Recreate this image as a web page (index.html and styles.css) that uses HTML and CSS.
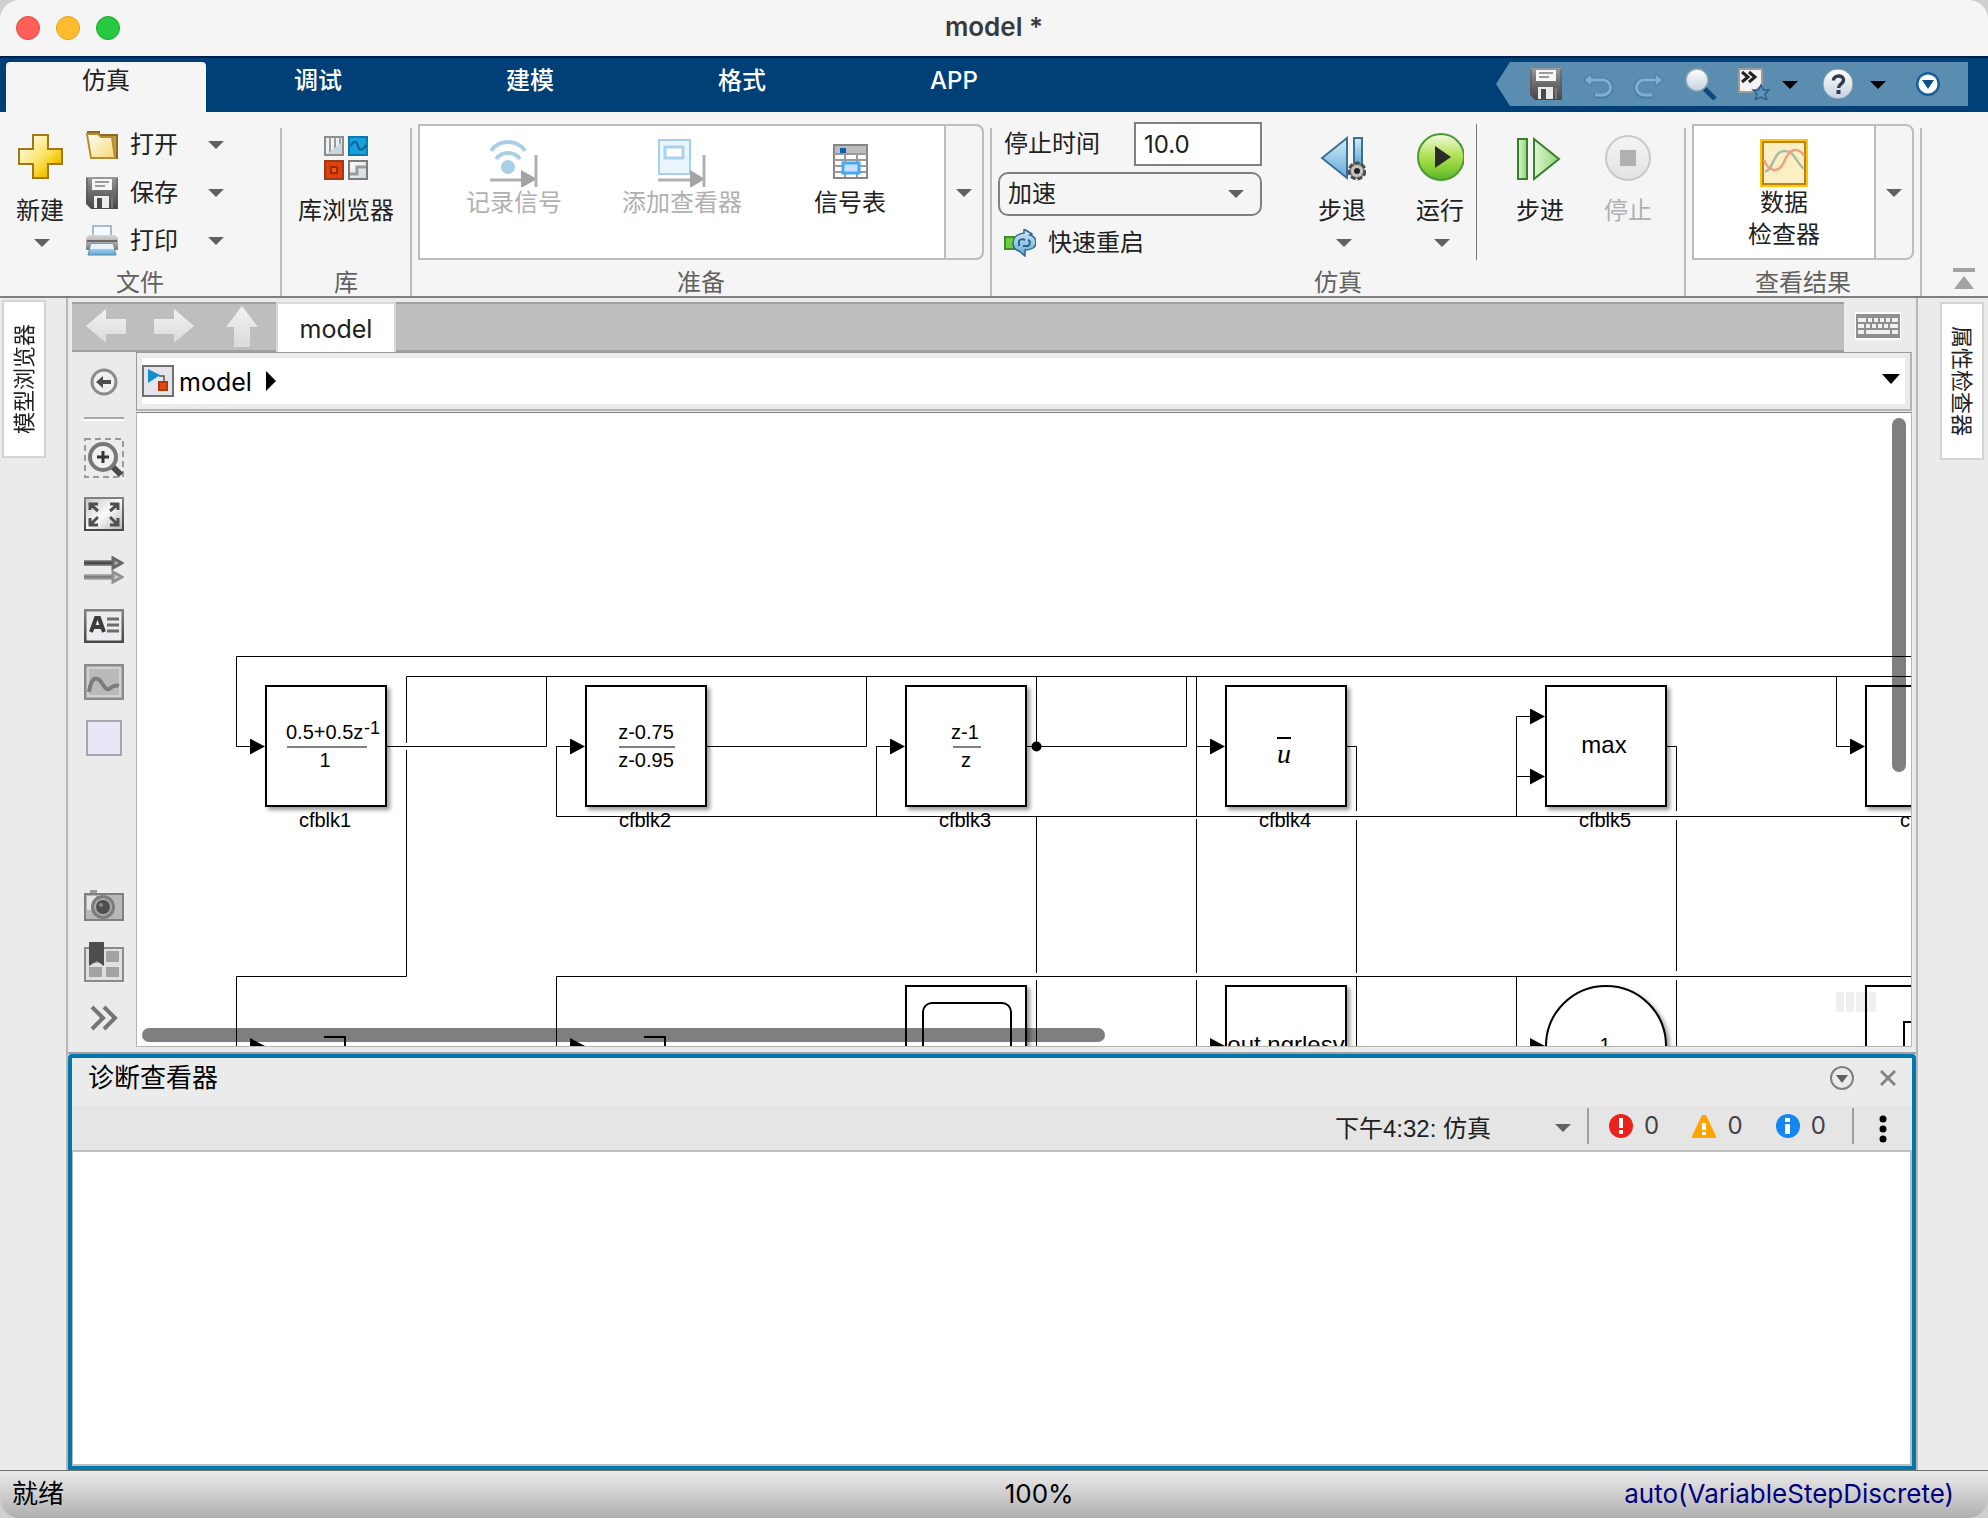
FILE: index.html
```html
<!DOCTYPE html>
<html lang="zh-CN">
<head>
<meta charset="utf-8">
<title>model *</title>
<link rel="stylesheet" href="styles.css">
</head>
<body>
<svg class="defs" aria-hidden="true">
  <defs>
    <linearGradient id="gold" x1="0" y1="0" x2="1" y2="1"><stop offset="0.1" stop-color="#fffdf0"/><stop offset="0.55" stop-color="#fbe05a"/><stop offset="0.75" stop-color="#f5c400"/><stop offset="1" stop-color="#e0a800"/></linearGradient>
    <linearGradient id="folder" x1="0" y1="0" x2="1" y2="1"><stop offset="0" stop-color="#fffef6"/><stop offset="1" stop-color="#f6d978"/></linearGradient>
    <linearGradient id="steel" x1="0" y1="0" x2="0" y2="1"><stop offset="0" stop-color="#9a9a9a"/><stop offset="0.5" stop-color="#6a6a6a"/><stop offset="1" stop-color="#484848"/></linearGradient>
    <linearGradient id="silver" x1="0" y1="0" x2="0" y2="1"><stop offset="0" stop-color="#d8d8d8"/><stop offset="1" stop-color="#7c7c7c"/></linearGradient>
    <linearGradient id="paper" x1="0" y1="0" x2="1" y2="1"><stop offset="0" stop-color="#ffffff"/><stop offset="1" stop-color="#ccd6e0"/></linearGradient>
    <linearGradient id="panel" x1="0" y1="0" x2="1" y2="1"><stop offset="0" stop-color="#c4c4c4"/><stop offset="0.5" stop-color="#fafafa"/><stop offset="1" stop-color="#b4b4b4"/></linearGradient>
    <linearGradient id="edge" x1="0" y1="0" x2="0" y2="1"><stop offset="0" stop-color="#808080"/><stop offset="1" stop-color="#484848"/></linearGradient>
    <linearGradient id="sky" x1="0" y1="0" x2="0" y2="1"><stop offset="0" stop-color="#d3ecfa"/><stop offset="1" stop-color="#5fa9d6"/></linearGradient>
    <linearGradient id="green" x1="0" y1="0" x2="0" y2="1"><stop offset="0" stop-color="#f4fbe6"/><stop offset="0.45" stop-color="#b4e25a"/><stop offset="0.7" stop-color="#8ed23a"/><stop offset="1" stop-color="#57b42c"/></linearGradient>
    <linearGradient id="leaf" x1="0" y1="0" x2="1" y2="0"><stop offset="0" stop-color="#dcf5cf"/><stop offset="1" stop-color="#8fd676"/></linearGradient>
    <linearGradient id="arrowFill" x1="0" y1="0" x2="0" y2="1"><stop offset="0" stop-color="#f2f2f2"/><stop offset="1" stop-color="#dadada"/></linearGradient>
    <linearGradient id="ball" x1="0" y1="0" x2="0" y2="1"><stop offset="0" stop-color="#ffffff"/><stop offset="1" stop-color="#c3d2df"/></linearGradient>
    <linearGradient id="stopFill" x1="0" y1="0" x2="0" y2="1"><stop offset="0" stop-color="#f4f4f4"/><stop offset="1" stop-color="#e2e2e2"/></linearGradient>
    <symbol id="caret" viewBox="0 0 16 8"><path d="M0 0h16L8 8z" fill="currentColor"/></symbol>
    <symbol id="disk" viewBox="0 0 32 32">
      <path d="M0 0h32v32H5l-5-5z" fill="url(#steel)"/>
      <path d="M1 1v25M31 1v30" stroke="#555" stroke-width="1"/>
      <rect x="6" y="2" width="20" height="11" fill="#f6f6f6"/>
      <path d="M9 5h14M9 9h10" stroke="#9b9b9b" stroke-width="2"/>
      <rect x="8" y="19" width="15" height="12" fill="#ececec"/>
      <rect x="11" y="21" width="5" height="10" fill="#4a4a4a"/>
      <path d="M26 20v11" stroke="#777" stroke-width="2"/>
    </symbol>
    <filter id="shadow" x="-10%" y="-10%" width="130%" height="130%"><feDropShadow dx="3" dy="3" stdDeviation="2" flood-color="#000" flood-opacity="0.4"/></filter>
    <marker id="head" viewBox="0 0 15 16" refX="0" refY="8" markerWidth="15" markerHeight="16" markerUnits="userSpaceOnUse" orient="auto"><path d="M0 0l15 8l-15 8z"/></marker>
  </defs>
</svg>

<div class="window">
  <header class="titlebar">
    <div class="lights">
      <button class="light light-close" aria-label="关闭"></button>
      <button class="light light-min" aria-label="最小化"></button>
      <button class="light light-max" aria-label="缩放"></button>
    </div>
    <h1 class="title">model *</h1>
  </header>

  <nav class="tabs">
    <button class="tab tab-active">仿真</button>
    <button class="tab">调试</button>
    <button class="tab">建模</button>
    <button class="tab">格式</button>
    <button class="tab">APP</button>
    <div class="quick">
      <button class="icon-btn" aria-label="保存"><svg width="32" height="32"><use href="#disk"/></svg></button>
      <button class="icon-btn" aria-label="撤销"><svg width="30" height="32" viewBox="0 0 30 32"><path d="M3 12h17a7.500 7.500 0 0 1 0 16h-9" fill="none" stroke="#4a7fa6" stroke-width="5"/><path d="M0 12l9-7v14z" fill="#4a7fa6"/><path d="M4 12h16a7 7 0 0 1 0 15h-8" fill="none" stroke="#7fb0d2" stroke-width="3"/><path d="M2 12l6-5v10z" fill="#7fb0d2"/></svg></button>
      <button class="icon-btn" aria-label="重做"><svg width="30" height="32" viewBox="0 0 30 32"><path d="M27 12H10a7.500 7.500 0 0 0 0 16h9" fill="none" stroke="#4a7fa6" stroke-width="5"/><path d="M30 12l-9-7v14z" fill="#4a7fa6"/><path d="M26 12H10a7 7 0 0 0 0 15h8" fill="none" stroke="#7fb0d2" stroke-width="3"/><path d="M28 12l-6-5v10z" fill="#7fb0d2"/></svg></button>
      <button class="icon-btn" aria-label="搜索"><svg width="32" height="32" viewBox="0 0 32 32"><path d="M18 19l12 12" stroke="#0b4a80" stroke-width="5"/><circle cx="12" cy="12" r="11" fill="url(#ball)" stroke="#8fa3b3" stroke-width="1.500"/></svg></button>
      <button class="icon-btn" aria-label="收藏夹"><svg width="34" height="32" viewBox="0 0 34 32"><path d="M1 1h23v16l-8 7H1z" fill="#f4f4f4" stroke="#9b9b9b" stroke-width="2"/><path d="M4 4l6 5-6 5M11 4l6 5-6 5" fill="none" stroke="#222" stroke-width="3"/><path d="M23 17l2.500 5h5.500l-4 4 2 6-6-3-6 3 2-6-4-4h5.500z" fill="#5d92bd" stroke="#2d5f88" stroke-width="1.500"/></svg></button>
      <svg class="caret caret-black"><use href="#caret"/></svg>
      <button class="icon-btn help" aria-label="帮助"><svg width="32" height="32" viewBox="0 0 32 32"><circle cx="16" cy="16" r="15" fill="url(#ball)" stroke="#8298ab"/><path d="M11.500 12.500c0-6 10-6 10 -0.500c0 4-5 4-5 8" fill="none" stroke="#2f3b4e" stroke-width="3.500"/><rect x="14.500" y="22" width="4" height="4" fill="#2f3b4e"/></svg></button>
      <svg class="caret caret-black"><use href="#caret"/></svg>
      <button class="icon-btn more" aria-label="更多"><svg width="24" height="24" viewBox="0 0 24 24"><circle cx="12" cy="12" r="12" fill="#1b5f96"/><circle cx="12" cy="12" r="9.500" fill="#fff"/><path d="M6 8h12l-6 9z" fill="#0d4f85"/></svg></button>
    </div>
  </nav>

  <div class="ribbon">
    <section class="group group-file">
      <div class="tools">
        <button class="big">
          <svg width="48" height="48" viewBox="0 0 48 48"><path d="M17 2h15v14h14v15H32v14H17V31H3V16h14z" fill="url(#gold)" stroke="#a07818" stroke-width="2"/></svg>
          <span>新建</span><svg class="caret"><use href="#caret"/></svg>
        </button>
        <div class="rows">
          <button class="row"><svg width="32" height="32" viewBox="0 0 32 32"><path d="M1 3h12v3h18v23h-5" fill="#c19a45" stroke="#8f6a1c" stroke-width="2"/><path d="M1 5l4 24h24l-3-21H15l-3-3z" fill="url(#folder)" stroke="#b58d36" stroke-width="2"/></svg><span>打开</span><svg class="caret"><use href="#caret"/></svg></button>
          <button class="row"><svg width="32" height="32"><use href="#disk"/></svg><span>保存</span><svg class="caret"><use href="#caret"/></svg></button>
          <button class="row"><svg width="32" height="32" viewBox="0 0 32 32"><rect x="7" y="1" width="18" height="12" fill="#f5fafe" stroke="#8ea7bd" stroke-width="1.500"/><path d="M3 10h26l3 3v12H0V13z" fill="url(#silver)"/><path d="M1 16h30" stroke="#6b6b6b" stroke-width="2"/><path d="M5 19h22l3 11H2z" fill="url(#sky)" stroke="#5e86a6"/><path d="M5 19h22l1 5H4z" fill="#e7f2fa"/></svg><span>打印</span><svg class="caret"><use href="#caret"/></svg></button>
        </div>
      </div>
      <h2 class="caption">文件</h2>
    </section>

    <section class="group group-lib">
      <div class="tools">
        <button class="big">
          <svg width="48" height="48" viewBox="0 0 48 48"><g stroke-width="2"><rect x="3" y="4" width="18" height="18" fill="#eef1f4" stroke="#8c8c8c"/><path d="M8 4v16M13 4v12M18 4v8" stroke="#9b9b9b" fill="none"/><path d="M5 21L20 9v12z" fill="#c9d7e2"/><rect x="27" y="4" width="18" height="18" fill="#16a0dc" stroke="#1079ab"/><path d="M29 13c3-7 6-4 7 0s4 6 8-1" fill="none" stroke="#075f8f"/><rect x="3" y="28" width="18" height="18" fill="#e04008" stroke="#9b3a1c"/><rect x="9" y="34" width="6" height="6" fill="#f0561c" stroke="#9b2c08"/><rect x="27" y="28" width="18" height="18" fill="url(#paper)" stroke="#7c7c7c"/><path d="M28 41h7v-7h9" fill="none" stroke="#9b9b9b" stroke-width="3"/></g></svg>
          <span>库浏览器</span>
        </button>
      </div>
      <h2 class="caption">库</h2>
    </section>

    <section class="group group-prep">
      <div class="tools">
        <div class="gallery">
          <div class="items">
            <button class="item" disabled><svg width="48" height="48" viewBox="0 0 48 48"><g fill="none" stroke="#a9cfe8" stroke-width="4"><path d="M1 12c8-12 26-12 34 0"/><path d="M6 20c6-8 18-8 24 0"/></g><circle cx="18" cy="28" r="7" fill="#a9cfe8"/><path d="M0 41h34" stroke="#b0b0b0" stroke-width="3"/><path d="M31 31l16 9-16 9z" fill="#a3a3a3"/><path d="M46 16v32" stroke="#b0b0b0" stroke-width="3"/></svg><span>记录信号</span></button>
            <button class="item" disabled><svg width="48" height="48" viewBox="0 0 48 48"><rect x="1" y="1" width="31" height="34" fill="#eaf4fb" stroke="#a9cfe8" stroke-width="2"/><rect x="7" y="8" width="18" height="11" fill="#fff" stroke="#a9d3ec" stroke-width="3"/><path d="M0 41h34" stroke="#b0b0b0" stroke-width="3"/><path d="M32 31l15 9-15 9z" fill="#a3a3a3"/><path d="M46 16v32" stroke="#b0b0b0" stroke-width="3"/></svg><span>添加查看器</span></button>
            <button class="item"><svg width="48" height="48" viewBox="0 0 48 48"><rect x="8" y="6" width="33" height="33" fill="#fff" stroke="#868686" stroke-width="2"/><rect x="9" y="7" width="31" height="8" fill="#bdbdbd"/><path d="M8 15h33M8 21h33M8 27h33M8 33h33M19 15v23M31 15v23" stroke="#9a9a9a" stroke-width="2"/><rect x="14" y="9" width="6" height="5" fill="#0a5fae"/><rect x="17" y="24" width="16" height="10" fill="#c5e1fa" stroke="#45a8f4" stroke-width="3"/></svg><span>信号表</span></button>
          </div>
          <button class="drop" aria-label="展开"><svg class="caret"><use href="#caret"/></svg></button>
        </div>
      </div>
      <h2 class="caption">准备</h2>
    </section>

    <section class="group group-sim">
      <div class="tools">
        <div class="fields">
          <div class="field"><label for="stop">停止时间</label><input id="stop" class="stop" type="text" value="10.0"></div>
          <div class="combo"><select class="mode" aria-label="仿真模式"><option>加速</option></select><svg class="caret"><use href="#caret"/></svg></div>
          <button class="restart"><svg width="32" height="28" viewBox="0 0 32 28"><rect x="0" y="7" width="12" height="14" fill="#3f8d2f"/><rect x="2" y="9" width="7" height="10" fill="#6fce3f"/><path d="M20 4V0l8 5-2 1c4 1 6 4 6 8s-4 7-11 7v6l-6-5c-4-1-6-4-6-8 0-5 4-9 11-10z" fill="url(#sky)" stroke="#2f6590" stroke-width="1.500"/><path d="M15 17v-5c1-2 4-2 6-1M24 11c3 1 2 5 0 6h-5" fill="none" stroke="#2f6289" stroke-width="2"/></svg><span>快速重启</span></button>
        </div>
        <button class="big"><svg width="48" height="48" viewBox="0 0 48 48"><path d="M4 25L29 5v40z" fill="url(#sky)" stroke="#3c6f95" stroke-width="2"/><rect x="36" y="5" width="8" height="26" fill="url(#sky)" stroke="#3c6f95" stroke-width="2"/><circle cx="39" cy="38" r="8" fill="#8a8a8a" stroke="#4d4d4d" stroke-width="3" stroke-dasharray="5 2"/><circle cx="39" cy="38" r="6" fill="#c4c4c4"/><circle cx="39" cy="38" r="3" fill="#222"/></svg><span>步退</span><svg class="caret"><use href="#caret"/></svg></button>
        <button class="big"><svg width="48" height="48" viewBox="0 0 48 48"><circle cx="25" cy="24" r="23" fill="url(#green)" stroke="#4a9a35" stroke-width="2"/><path d="M19 13l16 11-16 11z" fill="#2a2a2a"/></svg><span>运行</span><svg class="caret"><use href="#caret"/></svg></button>
        <div class="rule"></div>
        <button class="big"><svg width="48" height="48" viewBox="0 0 48 48"><rect x="2" y="6" width="9" height="40" fill="url(#leaf)" stroke="#397f2c" stroke-width="2"/><path d="M18 6l25 20-25 20z" fill="url(#leaf)" stroke="#397f2c" stroke-width="2"/></svg><span>步进</span></button>
        <button class="big" disabled><svg width="48" height="48" viewBox="0 0 48 48"><circle cx="24" cy="25" r="22" fill="url(#stopFill)" stroke="#c9c9c9" stroke-width="2"/><rect x="16" y="17" width="16" height="16" fill="#b0b0b0"/></svg><span>停止</span></button>
      </div>
      <h2 class="caption">仿真</h2>
    </section>

    <section class="group group-view">
      <div class="tools">
        <div class="gallery">
          <div class="items">
            <button class="item"><svg width="48" height="48" viewBox="0 0 48 48"><rect x="1" y="1" width="46" height="46" fill="#fcefc4" stroke="#fac800" stroke-width="2"/><rect x="3" y="3" width="42" height="42" fill="none" stroke="#c08018" stroke-width="2"/><path d="M5 32c8 1 8-20 19-20s10 9 20 18" fill="none" stroke="#a3bfa8" stroke-width="2.500"/><path d="M4 21c3 6 5 10 11 10 10 0 10-20 20-20 4 0 7 2 9 6" fill="none" stroke="#f0a084" stroke-width="2.500"/></svg><span>数据<br>检查器</span></button>
          </div>
          <button class="drop" aria-label="展开"><svg class="caret"><use href="#caret"/></svg></button>
        </div>
      </div>
      <h2 class="caption">查看结果</h2>
    </section>
    <button class="collapse icon-btn" aria-label="折叠"><svg width="22" height="22" viewBox="0 0 22 22"><path d="M0 0h22v4H0zM11 8l10 13H1z" fill="#a2a2a2"/></svg></button>
  </div>

  <main class="main">
    <aside class="side side-left"><button class="side-tab">模型浏览器</button></aside>

    <div class="center">
      <div class="editor">
        <div class="nav">
          <div class="nav-bar">
            <button class="icon-btn" aria-label="后退"><svg width="42" height="42" viewBox="0 0 42 42"><path d="M1 20L21 3v10h20v15H21v9z" fill="url(#arrowFill)"/></svg></button>
            <button class="icon-btn" aria-label="前进"><svg width="42" height="42" viewBox="0 0 42 42"><path d="M41 20L21 3v10H1v15h20v9z" fill="url(#arrowFill)"/></svg></button>
            <button class="icon-btn" aria-label="向上"><svg width="34" height="42" viewBox="0 0 34 42"><path d="M17 0L1 21h8v20h16V21h8z" fill="url(#arrowFill)"/></svg></button>
            <button class="doc-tab">model</button>
          </div>
          <button class="keys icon-btn" aria-label="键盘快捷方式"><svg width="46" height="28" viewBox="0 0 46 28"><rect width="46" height="28" fill="#fff"/><rect x="1" y="2" width="44" height="24" fill="#8f8f8f"/><g fill="#f0f0f0"><path d="M3 6h8v4H3zM13 6h4v4h-4zM19 6h4v4h-4zM25 6h4v4h-4zM31 6h4v4h-4zM37 6h6v4h-6zM3 12h6v4H3zM11 12h4v4h-4zM17 12h4v4h-4zM23 12h4v4h-4zM29 12h4v4h-4zM35 12h8v4h-8zM3 18h6v4H3zM11 18h24v4H11zM37 18h6v4h-6z"/></g></svg></button>
        </div>
        <div class="work">
          <div class="palette">
            <button class="icon-btn pal" aria-label="隐藏浏览器"><svg width="28" height="28" viewBox="0 0 28 28"><circle cx="14" cy="14" r="12" fill="#f0f0f0" stroke="#8c8c8c" stroke-width="3"/><path d="M6 14l7-6v4h8v4h-8v4z" fill="#4e4e4e"/></svg></button>
            <hr class="pal-rule">
            <button class="icon-btn pal" aria-label="缩放"><svg width="40" height="40" viewBox="0 0 40 40"><rect x="1" y="1" width="38" height="38" fill="none" stroke="#9a9a9a" stroke-width="2" stroke-dasharray="6 4"/><path d="M27 27l10 10" stroke="#4a4a4a" stroke-width="6"/><circle cx="19" cy="19" r="13" fill="#f0f0f0" stroke="#777" stroke-width="4"/><path d="M13 19h12M19 13v12" stroke="#333" stroke-width="3"/></svg></button>
            <button class="icon-btn pal" aria-label="适应视图"><svg width="40" height="34" viewBox="0 0 40 34"><rect x="1" y="1" width="38" height="32" fill="url(#panel)" stroke="url(#edge)" stroke-width="2"/><g fill="none" stroke="#505050" stroke-width="3"><path d="M6 13V7h8M6 7l8 7M34 13V7h-8M34 7l-8 7M6 21v7h8M6 28l8-8M34 21v7h-8M34 28l-8-8"/></g></svg></button>
            <button class="icon-btn pal" aria-label="采样时间"><svg width="40" height="30" viewBox="0 0 40 30"><path d="M0 8h30" stroke="#8c8c8c" stroke-width="6"/><path d="M0 8h30" stroke="#4a4a4a" stroke-width="3"/><path d="M0 22h30" stroke="#b0b0b0" stroke-width="6"/><path d="M0 22h30" stroke="#808080" stroke-width="3"/><path d="M29 3l9 5-9 5z" fill="#aaa" stroke="#666" stroke-width="3"/><path d="M29 17l9 5-9 5z" fill="#ccc" stroke="#929292" stroke-width="3"/></svg></button>
            <button class="icon-btn pal" aria-label="注释"><svg width="40" height="34" viewBox="0 0 40 34"><rect x="1" y="1" width="38" height="32" fill="#ececf0" stroke="url(#edge)" stroke-width="3"/><path d="M7 23l5-14h3l5 14M9 18h9" fill="none" stroke="#3c3c3c" stroke-width="4"/><path d="M23 10h12M23 16h12M23 22h12" stroke="#6c6c6c" stroke-width="3"/></svg></button>
            <button class="icon-btn pal" aria-label="图像"><svg width="40" height="36" viewBox="0 0 40 36"><rect x="1" y="1" width="38" height="34" fill="#d2d2d2" stroke="#8a8a8a" stroke-width="3"/><rect x="5" y="5" width="30" height="26" fill="#bababa"/><path d="M5 28c2-12 5-15 9-13 5 3 7 12 11 10 3-2 5-5 10-3" fill="none" stroke="#7c7c7c" stroke-width="4"/></svg></button>
            <button class="icon-btn pal" aria-label="区域"><svg width="36" height="36" viewBox="0 0 36 36"><rect x="1" y="1" width="34" height="34" fill="#e7e7f7" stroke="#a5a5ad" stroke-width="2"/></svg></button>
            <button class="icon-btn pal pal-end" aria-label="快照"><svg width="40" height="32" viewBox="0 0 40 32"><path d="M6 0h7v4H6z" fill="#9a9a9a"/><rect x="1" y="4" width="38" height="26" fill="#b8b8b8" stroke="#808080" stroke-width="2"/><path d="M3 6h9v14H3z" fill="#e4e4e4"/><circle cx="19" cy="17" r="12" fill="#7c7c7c"/><circle cx="19" cy="17" r="9" fill="#a8a8a8"/><circle cx="19" cy="17" r="7" fill="#4e4e4e"/><circle cx="17" cy="15" r="2" fill="#888"/></svg></button>
            <button class="icon-btn pal" aria-label="书签"><svg width="40" height="40" viewBox="0 0 40 40"><rect x="1" y="6" width="38" height="33" fill="#e0e0e0" stroke="#8a8a8a" stroke-width="2"/><g fill="#a2a2a2"><rect x="5" y="10" width="13" height="11"/><rect x="22" y="9" width="13" height="11"/><rect x="5" y="25" width="13" height="10"/><rect x="22" y="25" width="13" height="10"/></g><path d="M5 0h15v24l-7-5-8 5z" fill="#4d4d4d"/></svg></button>
            <button class="icon-btn pal" aria-label="更多工具"><svg width="28" height="26" viewBox="0 0 28 26"><path d="M2 2l11 11L2 24M14 2l11 11-11 11" fill="none" stroke="#757575" stroke-width="4"/></svg></button>
          </div>

          <div class="stage">
            <div class="crumbs">
              <svg width="32" height="32" viewBox="0 0 32 32"><rect x="1" y="1" width="30" height="30" fill="#e4e4ea" stroke="#707070" stroke-width="2"/><path d="M6 4l12 6-12 8z" fill="#128fce"/><path d="M17 11h5v5" fill="none" stroke="#555" stroke-width="1.500"/><rect x="17" y="17" width="8" height="8" fill="#e24a10" stroke="#b83604" stroke-width="2"/></svg>
              <a class="crumb" href="#">model</a>
              <svg width="10" height="20" viewBox="0 0 10 20"><path d="M0 0l10 10L0 20z"/></svg>
              <button class="icon-btn crumb-menu" aria-label="历史"><svg width="18" height="10" viewBox="0 0 18 10"><path d="M0 0h18L9 10z"/></svg></button>
            </div>
            <div class="canvas">
              <svg class="diagram" role="img" aria-label="model 框图">
                <g transform="translate(-137 -413)">
                  <g class="wire">
                    <path d="M2000 656.500H236.500V746.500H250" marker-end="url(#head)"/>
                    <path d="M2000 676.500H406.500V743M406.500 750V976.500H236.500V1060"/>
                    <path d="M387 746.500H546.500V676.500M707 746.500H866.500V676.500M1027 746.500H1186.500V676.500M1036.500 676.500V746.500M1036.500 816.500V973M1036.500 980V1060"/>
                    <path d="M2000 816.500H556.500V746.500H570" marker-end="url(#head)"/>
                    <path d="M876.500 816.500V746.500H890" marker-end="url(#head)"/>
                    <path d="M1196.500 676.500V816.500M1196.500 819V973M1196.500 980V1060"/>
                    <path d="M1196.500 746.500H1210" marker-end="url(#head)"/>
                    <path d="M1347 746.500H1356.500V811M1356.500 820V973M1356.500 976V1060"/>
                    <path d="M1516.500 816.500V716.500H1530" marker-end="url(#head)"/>
                    <path d="M1516.500 776.500H1530" marker-end="url(#head)"/>
                    <path d="M1667 746.500H1676.500V811M1676.500 820V971M1676.500 980V1060"/>
                    <path d="M1836.500 676.500V746.500H1850" marker-end="url(#head)"/>
                    <path d="M2000 976.500H556.500V1060M1516.500 976.500V1060"/>
                  </g>
                  <circle cx="1036.500" cy="746.500" r="5"/>
                  <g class="block" filter="url(#shadow)">
                    <rect x="266" y="686" width="120" height="120"/>
                    <rect x="586" y="686" width="120" height="120"/>
                    <rect x="906" y="686" width="120" height="120"/>
                    <rect x="1226" y="686" width="120" height="120"/>
                    <rect x="1546" y="686" width="120" height="120"/>
                    <rect x="1866" y="686" width="120" height="120"/>
                    <rect x="906" y="986" width="120" height="120"/>
                    <rect x="1226" y="986" width="120" height="120"/>
                    <circle cx="1606" cy="1046" r="60"/>
                    <rect x="1866" y="986" width="120" height="120"/>
                  </g>
                  <g class="glyph">
                    <rect x="923" y="1003" width="88" height="80" rx="9"/>
                    <path d="M324 1037H345V1060M644 1037H665V1060M1904 1060V1022H1940"/>
                  </g>
                  <path d="M250 1038l15 8-15 8zM570 1038l15 8-15 8zM1210 1038l15 8-15 8zM1530 1038l15 8-15 8z"/>
                  <g class="bar"><path d="M287 747H367M619 747H675M953 747H981"/></g>
                  <path d="M1277 738h14" stroke="#000" stroke-width="2"/>
                  <g class="expr">
                    <text x="286" y="739" class="lead">0.5+0.5z</text><text x="364" y="734" class="lead sup">-1</text><text x="325" y="767">1</text>
                    <text x="646" y="739">z-0.75</text><text x="646" y="767">z-0.95</text>
                    <text x="965" y="739">z-1</text><text x="966" y="767">z</text>
                    <text class="mean" x="1284" y="763">u</text>
                    <text class="large" x="1604" y="753">max</text>
                    <text class="large" x="1286" y="1053">out.ngrlesv</text>
                    <text x="1605" y="1052">1</text>
                    <text x="325" y="827">cfblk1</text><text x="645" y="827">cfblk2</text><text x="965" y="827">cfblk3</text><text x="1285" y="827">cfblk4</text><text x="1605" y="827">cfblk5</text><text x="1926" y="827">cfblk6</text>
                  </g>
                  <g fill="#000" fill-opacity="0.06"><rect x="1836" y="992" width="8" height="20"/><rect x="1846" y="992" width="8" height="20"/><rect x="1856" y="992" width="20" height="20"/></g>
                </g>
              </svg>
              <div class="scroll scroll-v"></div>
              <div class="scroll scroll-h"></div>
            </div>
          </div>
        </div>
      </div>

      <section class="diag">
        <div class="diag-head">
          <h2 class="diag-title">诊断查看器</h2>
          <button class="icon-btn" aria-label="面板菜单"><svg width="26" height="26" viewBox="0 0 26 26"><circle cx="13" cy="13" r="11" fill="none" stroke="#808080" stroke-width="2"/><path d="M7 10h12l-6 8z" fill="#606060"/></svg></button>
          <button class="icon-btn" aria-label="关闭面板"><svg width="16" height="16" viewBox="0 0 16 16"><path d="M1 1l14 14M15 1L1 15" stroke="#858585" stroke-width="3"/></svg></button>
        </div>
        <div class="diag-bar">
          <div class="combo run-combo"><select class="run" aria-label="运行记录"><option>下午4:32: 仿真</option></select><svg class="caret"><use href="#caret"/></svg></div>
          <div class="counts">
            <span class="count"><svg width="24" height="24" viewBox="0 0 24 24"><circle cx="12" cy="12" r="12" fill="#ec221c"/><path d="M10 4h4v10h-4zM10 16h4v4h-4z" fill="#fff"/></svg>0</span>
            <span class="count"><svg width="24" height="24" viewBox="0 0 24 24"><path d="M10 1h4l10 21v2H0v-2z" fill="#fea500"/><path d="M10 9h4v7h-4zM10 18h4v3h-4z" fill="#fff"/></svg>0</span>
            <span class="count"><svg width="24" height="24" viewBox="0 0 24 24"><circle cx="12" cy="12" r="12" fill="#1585f3"/><path d="M9 4h5v4H9zM9 10h5v10H9z" fill="#fff"/></svg>0</span>
          </div>
          <button class="icon-btn kebab" aria-label="选项"><svg width="8" height="28" viewBox="0 0 8 28"><circle cx="4" cy="4" r="3.500"/><circle cx="4" cy="14" r="3.500"/><circle cx="4" cy="24" r="3.500"/></svg></button>
        </div>
        <div class="diag-body"></div>
      </section>
    </div>

    <aside class="side side-right"><button class="side-tab">属性检查器</button></aside>
  </main>

  <footer class="status">
    <span>就绪</span><span class="zoom">100%</span><a class="solver" href="#">auto(VariableStepDiscrete)</a>
  </footer>
</div>
</body>
</html>
```

FILE: styles.css
```css
* { box-sizing: border-box; }
html, body { height: 100%; }
body {
  margin: 0;
  background: #cfcfcf;
  color: #212121;
  font: 24px/28px Inter, "Noto Sans CJK SC", sans-serif;
}
button, input, select { font: inherit; color: inherit; }
button { padding: 0; border: 0; background: none; }
h1, h2 { margin: 0; font-size: inherit; font-weight: 400; }
svg { display: block; flex: none; }
.defs { position: absolute; width: 0; height: 0; }
.icon-btn { display: flex; align-items: center; justify-content: center; flex: none; }
.caret { width: 16px; height: 8px; color: #616161; }
.caret-black { color: #000; }

.window {
  display: flex;
  flex-direction: column;
  height: 100vh;
  overflow: hidden;
  border-radius: 20px;
  background: #ebebeb;
}

/* title bar */
.titlebar {
  display: grid;
  grid-template-columns: 1fr auto 1fr;
  align-items: center;
  flex: none;
  height: 56px;
  padding: 0 16px;
  background: #f5f5f5;
}
.lights { display: flex; gap: 16px; }
.light { width: 24px; height: 24px; border-radius: 50%; }
.light-close { background: #ff5f57; border: 1px solid #e2463f; }
.light-min { background: #febc2e; border: 1px solid #e1a116; }
.light-max { background: #28c840; border: 1px solid #12ac28; }
.title { padding-bottom: 2px; font-size: 26px; font-weight: 600; color: #3a3a3a; }

/* ribbon tabs */
.tabs {
  display: flex;
  gap: 12px;
  flex: none;
  height: 56px;
  padding: 4px 20px 0 6px;
  border-top: 2px solid #00204e;
  background: #004077;
}
.tab { width: 200px; padding-bottom: 12px; color: #fff; font-weight: 500; }
.tab-active { border-radius: 4px 4px 0 0; background: #f5f5f5; color: #212121; font-weight: 400; }
.quick {
  display: flex;
  align-items: center;
  gap: 21px;
  height: 44px;
  margin-left: auto;
  padding: 0 28px 0 34px;
  background: #5b8db0;
  clip-path: polygon(0 50%, 14px 0, 100% 0, 100% 100%, 14px 100%);
}
.quick .caret { margin: 2px 0 0 -11px; }
.quick .caret + .help { margin-left: 3px; }
.quick .help + .caret { margin-left: -5px; }
.quick .more { margin-left: 9px; }

/* ribbon */
.ribbon {
  display: flex;
  flex: none;
  height: 186px;
  border-bottom: 2px solid #808080;
  background: #f5f5f5;
}
.group {
  display: flex;
  flex-direction: column;
  flex: none;
  padding-right: 2px;
  background: linear-gradient(#bdbdbd, #bdbdbd) right bottom / 2px 168px no-repeat;
}
.group-file { width: 282px; }
.group-lib { width: 130px; }
.group-prep { width: 580px; }
.group-sim { width: 694px; }
.group-view { width: 236px; }
.tools { display: flex; flex: none; height: 156px; }
.caption { line-height: 30px; text-align: center; color: #616161; }
.big {
  display: flex;
  flex-direction: column;
  align-items: center;
  gap: 16px;
  min-width: 48px;
  height: 100%;
  padding-top: 21px;
}
.big .caret { margin: -2px 0 0 4px; }
.big:disabled, .item:disabled { color: #b0b0b0; }
.group-file .tools { gap: 22px; padding-left: 16px; }
.group-lib .tools { justify-content: center; }
.rows { padding-top: 9px; }
.row { display: flex; align-items: center; gap: 12px; height: 48px; }
.row .caret { margin-left: 18px; }

.gallery {
  display: flex;
  flex: 1;
  height: 136px;
  margin: 12px 6px 0;
  border: 2px solid #bdbdbd;
  border-radius: 0 8px 8px 0;
  background: #f5f5f5;
}
.items { display: flex; flex: 1; padding: 0 10px; background: #fff; }
.item {
  display: flex;
  flex-direction: column;
  align-items: center;
  flex: 1;
  padding-top: 13px;
  line-height: 32px;
}
.drop {
  display: flex;
  align-items: center;
  justify-content: center;
  width: 38px;
  padding-top: 2px;
  border-left: 2px solid #bdbdbd;
}

.fields { display: flex; flex-direction: column; gap: 6px; width: 264px; margin: 10px 56px 0 6px; }
.field { display: flex; align-items: center; justify-content: space-between; height: 44px; padding-left: 6px; }
.stop { width: 128px; height: 44px; padding: 0 8px; border: 2px solid #808080; background: #fff; }
.combo { display: grid; align-items: center; }
.combo > * { grid-area: 1 / 1; }
.combo .caret { justify-self: end; pointer-events: none; }
.combo select { appearance: none; width: 100%; height: 44px; border: 0; background: none; }
.combo .mode { padding: 0 8px; border: 2px solid #808080; border-radius: 10px; }
.mode + .caret { margin-right: 18px; }
.restart { display: flex; align-items: center; gap: 12px; height: 42px; padding-left: 6px; }
.fields + .big { margin-right: 50px; }
.rule { width: 1px; height: 136px; margin: 12px 39px 0 12px; background: #777; }
.rule + .big { margin-right: 40px; }
.collapse { align-self: flex-end; margin: 0 13px 6px auto; }

/* workspace */
.main { display: flex; flex: 1; min-height: 0; }
.side { flex: none; }
.side-left { width: 68px; padding: 2px; border-right: 2px solid #b8b8b8; }
.side-right { width: 72px; padding: 4px 4px 0 22px; border-left: 2px solid #b8b8b8; }
.side-tab {
  width: 44px;
  height: 158px;
  border: 2px solid #d4d4d4;
  background: #fff;
  font-size: 22px;
  writing-mode: vertical-rl;
  text-orientation: sideways;
}
.side-left .side-tab { transform: rotate(180deg); }
.center { display: flex; flex-direction: column; flex: 1; min-width: 0; }
.editor {
  display: flex;
  flex-direction: column;
  flex: 1;
  min-height: 0;
  padding: 4px 4px 5px;
  border-bottom: 2px solid #a0a0a0;
}
.nav { display: flex; flex: none; height: 50px; }
.nav-bar {
  display: flex;
  align-items: center;
  flex: 1;
  gap: 26px;
  padding-left: 13px;
  border: solid #a0a0a0;
  border-width: 2px 0;
  background: #bebebe;
}
.nav-bar .icon-btn + .icon-btn + .icon-btn { margin-left: 4px; }
.doc-tab {
  align-self: stretch;
  width: 120px;
  margin: -2px 0 -2px -9px;
  padding-top: 2px;
  border: solid #d9d9d9;
  border-width: 2px 2px 0;
  background: #fff;
  font-size: 25px;
}
.keys { width: 68px; padding-bottom: 2px; }
.work { display: flex; flex: 1; min-height: 0; }
.palette {
  display: flex;
  flex-direction: column;
  align-items: center;
  gap: 16px;
  width: 64px;
  padding: 10px 0 9px;
}
.pal { width: 40px; height: 40px; }
.pal-end { margin-top: auto; }
.pal-rule { width: 40px; height: 4px; margin: -1px 0 1px; border: solid #a8a8a8; border-width: 2px 0 0; background: #fff; }
.stage { display: flex; flex-direction: column; flex: 1; min-width: 0; }
.crumbs {
  display: flex;
  align-items: center;
  flex: none;
  gap: 5px;
  height: 59px;
  padding: 0 6px 0 5px;
  border: 1px solid #999;
  border-width: 1px 2px 2px 1px;
  border-right-color: #b4b4b4;
  border-bottom-color: #b4b4b4;
  background: #fff;
  box-shadow: inset 0 0 0 5px #ebebeb;
}
.crumb { margin-right: 9px; padding-top: 2px; color: #000; font-size: 25px; text-decoration: none; }
.crumb-menu { margin-left: auto; padding: 0 4px 4px 0; }
.canvas {
  position: relative;
  flex: 1;
  min-height: 0;
  margin-top: 1px;
  overflow: hidden;
  border: 1px solid #b4b4b4;
  border-top-color: #808080;
  background: #fff;
}
.diagram { width: 100%; height: 100%; }
.wire { fill: none; stroke: #000; stroke-width: 1; }
.block { fill: #fff; stroke: #000; stroke-width: 2; }
.glyph { fill: none; stroke: #000; stroke-width: 2; }
.bar { stroke: #808080; stroke-width: 2; }
.expr { font: 20px "Liberation Sans", sans-serif; text-anchor: middle; }
.expr .lead { text-anchor: start; }
.expr .large { font-size: 24px; }
.expr .sup { font-size: 18px; }
.expr .mean { font: italic 28px "Liberation Serif", serif; }
.scroll { position: absolute; border-radius: 7px; background: rgba(0, 0, 0, 0.5); }
.scroll-v { top: 5px; right: 5px; width: 14px; height: 56%; }
.scroll-h { bottom: 4px; left: 5px; width: 54.3%; height: 14px; }

/* diagnostics */
.diag { display: flex; flex-direction: column; flex: none; height: 416px; border: 4px solid #0078ae; border-radius: 4px 4px 0 0; }
.diag-head { display: flex; align-items: center; gap: 25px; height: 48px; padding: 0 16px 8px; }
.diag-title { margin-right: auto; font-size: 26px; color: #000; }
.diag-bar {
  display: flex;
  align-items: center;
  justify-content: flex-end;
  height: 46px;
  padding-right: 25px;
  border-bottom: 2px solid #c0c0c0;
  background: #e5e5e5;
}
.run-combo { width: 236px; margin-right: 16px; }
.combo .run { padding: 2px 0 0; font-family: "Liberation Sans", "Noto Sans CJK SC", sans-serif; }
.counts {
  display: flex;
  justify-content: space-between;
  width: 267px;
  height: 36px;
  margin-bottom: 4px;
  padding: 0 26px 0 20px;
  border: solid #9e9e9e;
  border-width: 0 2px;
  color: #424242;
}
.count { display: flex; align-items: center; gap: 11px; }
.kebab { margin: 2px 0 0 25px; }
.diag-body { flex: 1; border: solid #bdbdbd; border-width: 0 2px 2px 1px; background: #fff; }

/* status bar */
.status {
  display: grid;
  grid-template-columns: 53fr auto 47fr;
  align-items: center;
  flex: none;
  height: 48px;
  padding: 0 34px 2px 12px;
  border-top: 1px solid #707070;
  background: linear-gradient(#ebebeb, #b0b0b0);
  font-size: 26px;
  color: #000;
}
.solver { justify-self: end; color: #00007f; text-decoration: none; }
```
